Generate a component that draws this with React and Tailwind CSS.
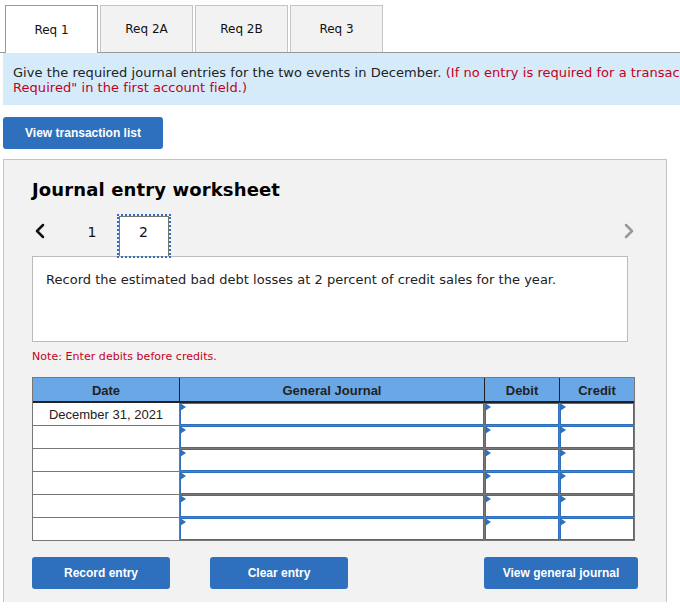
import { ChevronLeft, ChevronRight } from 'lucide-react';

const tabs = ['Req 1', 'Req 2A', 'Req 2B', 'Req 3'];
const verdana = "font-['DejaVu_Sans',Verdana,sans-serif]";
const arial = "font-['Liberation_Sans',Arial,sans-serif]";

const BlueButton = ({ label, className }) => (
  <button className={`h-8 bg-[#2e70bd] rounded-[3px] text-white text-xs font-bold ${arial} ${className}`}>
    {label}
  </button>
);

const EntryCell = () => (
  <div className="h-[23px] border-r border-b border-[#777] last:border-r-0">
    <div className="relative h-full border border-[#2e70bd] bg-white">
      <span className="absolute -left-[1px] -top-[1px] w-0 h-0 border-y-[4px] border-y-transparent border-l-[6px] border-l-[#2e70bd]"></span>
    </div>
  </div>
);

const App = () => {
  const rows = ['December 31, 2021', '', '', '', '', ''];

  return (
    <div className={`w-[680px] h-[611px] overflow-hidden bg-white ${verdana}`}>
      <div className="flex gap-[2px] pt-[5px] pl-[5px] h-[53px] border-b border-[#999]">
        {tabs.map((tab, i) => (
          <div
            key={tab}
            className={`w-[93px] flex items-center justify-center text-xs text-[#111] border ${
              i === 0 ? 'h-[48px] bg-white border-[#999] border-b-0' : 'h-[47px] bg-[#f2f2f2] border-[#c4c4c4] border-b-0'
            }`}
          >
            {tab}
          </div>
        ))}
      </div>

      <div className="ml-[3px] h-[52px] bg-[#d5ebfa] pl-[10px] pt-[12px] text-[13px] leading-[15px] tracking-[0.05px] text-[#222] whitespace-nowrap overflow-hidden">
        Give the required journal entries for the two events in December.{' '}
        <span className="text-[#c4001a]">
          (If no entry is required for a transaction/event, select "No Journal Entry
        </span>
        <br />
        <span className="text-[#c4001a]">Required" in the first account field.)</span>
      </div>

      <BlueButton label="View transaction list" className="block w-[160px] ml-[3px] mt-3" />

      <div className="ml-[3px] mt-[10px] w-[664px] h-[443px] bg-[#f2f2f2] border border-b-0 border-[#c4c4c4] pl-[28px]">
        <h2 className="mt-[18px] text-[18px] leading-6 font-bold tracking-[0.13px] text-black">Journal entry worksheet</h2>

        <div className="relative z-10 flex items-start h-[44px] mt-[12px] w-[597px]">
          <ChevronLeft size={24} strokeWidth={2.5} className="ml-[-4px] mt-[5px] text-[#111]" />
          <span className="w-[16px] ml-[32px] mt-[8px] text-center text-sm text-[#111]">1</span>
          <div className="ml-[17px] w-[54px] h-[44px] border-2 border-dotted border-[#2e70bd]">
            <div className="h-full bg-white border border-b-0 border-[#777] pt-[5px] pr-[1px] text-center text-sm text-[#111]">
              2
            </div>
          </div>
          <ChevronRight size={24} strokeWidth={2.5} className="ml-auto mr-[-12px] mt-[5px] text-[#999]" />
        </div>

        <div className="-mt-[2px] w-[596px] h-[86px] bg-white border border-[#bbb] pl-[13px] pt-[14px] text-[13px] leading-[18px] tracking-[0.02px] text-[#222]">
          Record the estimated bad debt losses at 2 percent of credit sales for the year.
        </div>

        <p className="mt-[7px] text-[11px] leading-4 tracking-[0.05px] text-[#c4001a]">Note: Enter debits before credits.</p>

        <div className={`mt-[12px] w-[603px] border-x border-t border-[#777] ${arial}`}>
          <div className="grid grid-cols-[147px_305px_75px_74px] h-[25px] bg-[#6aa7e6] border-b-2 border-[#222] text-[13px] font-bold text-[#222] text-center leading-[25px]">
            <div className="border-r border-[#222]">Date</div>
            <div className="border-r border-[#222]">General Journal</div>
            <div className="border-r border-[#222]">Debit</div>
            <div>Credit</div>
          </div>
          {rows.map((date, i) => (
            <div key={i} className="grid grid-cols-[147px_305px_75px_74px] h-[23px] bg-white">
              <div className="h-[23px] text-center text-[13px] leading-[24px] text-[#222] border-r border-b border-[#777]">{date}</div>
              <EntryCell />
              <EntryCell />
              <EntryCell />
            </div>
          ))}
        </div>

        <div className="flex mt-4">
          <BlueButton label="Record entry" className="w-[138px]" />
          <BlueButton label="Clear entry" className="w-[138px] ml-10" />
          <BlueButton label="View general journal" className="w-[154px] ml-[136px]" />
        </div>
      </div>
    </div>
  );
};

export default App;
